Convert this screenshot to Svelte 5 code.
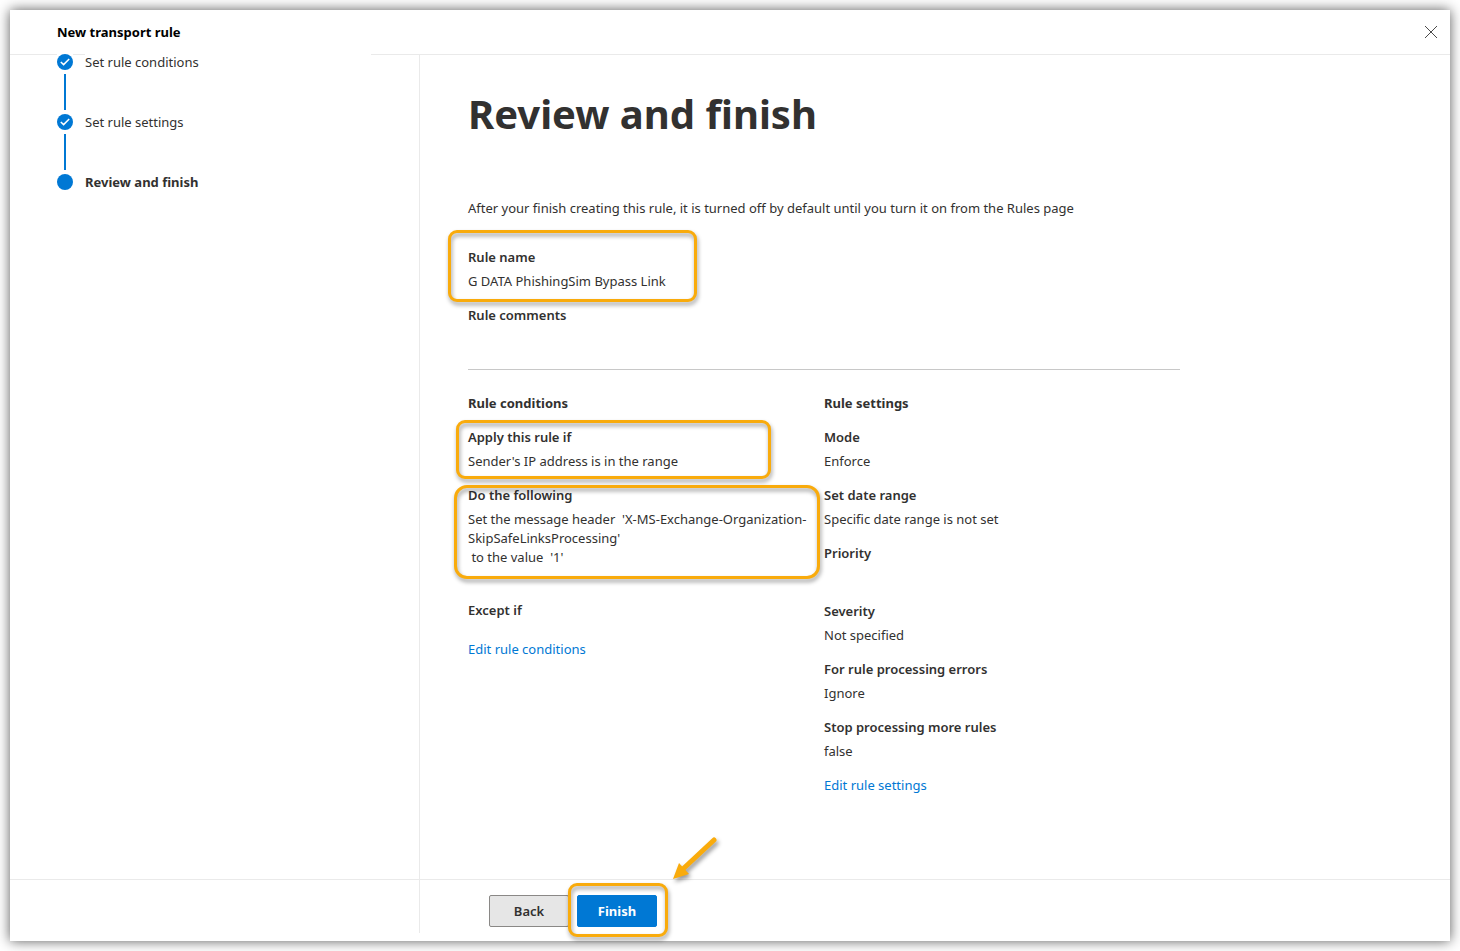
<script>
  const steps = [
    { label: 'Set rule conditions', done: true },
    { label: 'Set rule settings', done: true },
    { label: 'Review and finish', done: false }
  ];

  const conditions = [
    { label: 'Apply this rule if', value: "Sender's IP address is in the range", mark: 'mark-apply' },
    {
      label: 'Do the following',
      value: "Set the message header  'X-MS-Exchange-Organization-SkipSafeLinksProcessing'\n to the value  '1'\n\u00a0",
      mark: 'mark-action'
    },
    { label: 'Except if', value: '' }
  ];

  const settings = [
    { label: 'Mode', value: 'Enforce' },
    { label: 'Set date range', value: 'Specific date range is not set' },
    { label: 'Priority', value: '\u00a0' },
    { label: 'Severity', value: 'Not specified' },
    { label: 'For rule processing errors', value: 'Ignore' },
    { label: 'Stop processing more rules', value: 'false' }
  ];
</script>

{#snippet field(item)}
  <div class="field">
    <dt>{item.label}</dt>
    <dd>{item.value}</dd>
    {#if item.mark}
      <span class="mark {item.mark}"></span>
    {/if}
  </div>
{/snippet}

<div class="panel">
  <header>
    <h2>New transport rule</h2>
    <button class="close" type="button" aria-label="Close">
      <svg width="14" height="14" viewBox="0 0 14 14">
        <path d="M1 1 L13 13 M13 1 L1 13" fill="none" stroke="#4a4a4a" stroke-width="1" />
      </svg>
    </button>
  </header>

  <div class="body">
    <nav>
      <ol>
        {#each steps as step, i}
          <li class:current={!step.done}>
            <div class="track">
              <svg width="16" height="16" viewBox="0 0 16 16">
                <circle cx="8" cy="8" r="8" fill="#0078d4" />
                {#if step.done}
                  <path d="M3.8 8 L6.6 10.6 L12.2 5" fill="none" stroke="#fff" stroke-width="1.5" />
                {/if}
              </svg>
              {#if i < steps.length - 1}
                <span class="line"></span>
              {/if}
            </div>
            <div class="step-label">{step.label}</div>
          </li>
        {/each}
      </ol>
    </nav>

    <main>
      <h1>Review and finish</h1>
      <p>After your finish creating this rule, it is turned off by default until you turn it on from the Rules page</p>

      <dl>
        {@render field({ label: 'Rule name', value: 'G DATA PhishingSim Bypass Link', mark: 'mark-name' })}
        {@render field({ label: 'Rule comments', value: '\u00a0' })}
      </dl>

      <div class="columns">
        <section>
          <h3>Rule conditions</h3>
          <dl>
            {#each conditions as item}
              {@render field(item)}
            {/each}
          </dl>
          <a href="#conditions">Edit rule conditions</a>
        </section>
        <section>
          <h3>Rule settings</h3>
          <dl>
            {#each settings as item}
              {@render field(item)}
            {/each}
          </dl>
          <a href="#settings">Edit rule settings</a>
        </section>
      </div>
    </main>
  </div>

  <footer>
    <div class="rail"></div>
    <div class="actions">
      <button class="btn" type="button">Back</button>
      <div class="finish">
        <button class="btn primary" type="button">Finish</button>
        <span class="mark mark-finish"></span>
        <svg class="arrow" width="52" height="52" viewBox="0 0 52 52">
          <path d="M45 7 L15 35" fill="none" stroke="#f9ab0c" stroke-width="5" stroke-linecap="round" />
          <path d="M4 46 L10 30 L20 41 Z" fill="#f9ab0c" />
        </svg>
      </div>
    </div>
  </footer>
</div>

<style>
  :global(body) {
    margin: 0;
    background: #fff;
  }

  .panel {
    display: flex;
    flex-direction: column;
    box-sizing: border-box;
    min-height: calc(100vh - 20px);
    margin: 10px;
    background: #fff;
    box-shadow: 0 0 12px rgba(0, 0, 0, 0.65);
    color: #323130;
    font-family: "Segoe UI", "Noto Sans", "Open Sans", sans-serif;
    font-size: 13px;
    line-height: 19px;
  }

  header {
    display: flex;
    align-items: center;
    justify-content: space-between;
    height: 44px;
    padding: 0 12px 0 47px;
    border-bottom: 1px solid #eaeaea;
  }

  h1, h2, h3, p, ol, dl, dd {
    margin: 0;
    padding: 0;
  }

  h2, h3 {
    font-size: 13px;
    font-weight: 700;
  }

  h2 {
    color: #000;
  }

  .close {
    display: flex;
    padding: 0;
    border: 0;
    background: none;
    cursor: pointer;
  }

  .body {
    display: flex;
    flex: 1;
  }

  nav,
  .rail {
    box-sizing: border-box;
    flex: 0 0 410px;
    border-right: 1px solid #eaeaea;
  }

  nav {
    padding: 0 48px 0 47px;
  }

  /* the list has scrolled up against the header line */
  ol {
    margin-top: -1px;
    list-style: none;
  }

  li {
    display: flex;
    gap: 12px;
    height: 60px;
  }

  .track {
    display: flex;
    flex-direction: column;
    align-items: center;
    gap: 4px;
    background: #fff;
  }

  .line {
    width: 2px;
    height: 36px;
    background: #0078d4;
  }

  .step-label {
    flex: 1;
    height: 16px;
    background: #fff;
    line-height: 16px;
  }

  .current {
    font-weight: 700;
  }

  main {
    flex: 1;
    max-width: 712px;
    padding: 32px 48px;
  }

  h1 {
    font-size: 40px;
    font-weight: 700;
    line-height: 54px;
  }

  p {
    margin: 58px 0 30px;
  }

  dl {
    display: flex;
    flex-direction: column;
    gap: 15px;
  }

  .field {
    position: relative;
    display: flex;
    flex-direction: column;
    gap: 5px;
  }

  dt {
    font-weight: 600;
  }

  dd {
    white-space: pre-wrap;
  }

  .columns {
    display: grid;
    grid-template-columns: 1fr 1fr;
    margin-top: 20px;
    padding-top: 24px;
    border-top: 1px solid #c8c8c8;
  }

  section {
    display: flex;
    flex-direction: column;
    align-items: flex-start;
    gap: 15px;
  }

  a {
    color: #0078d4;
    text-decoration: none;
  }

  footer {
    display: flex;
    border-top: 1px solid #eaeaea;
  }

  .rail {
    margin-bottom: 8px;
  }

  .actions {
    display: flex;
    gap: 8px;
    padding: 15px 69px 14px;
  }

  .btn {
    box-sizing: border-box;
    width: 80px;
    height: 32px;
    padding: 0;
    border: 1px solid #8a8886;
    border-radius: 2px;
    background: #e6e6e6;
    color: #323130;
    font: inherit;
    font-weight: 600;
    cursor: pointer;
  }

  .primary {
    border-color: #0078d4;
    background: #0078d4;
    color: #fff;
    font-weight: 700;
  }

  .finish {
    position: relative;
  }

  /* orange callouts drawn over the form */
  .mark {
    position: absolute;
    border: 3px solid #f9ab0c;
    border-radius: 9px;
    filter: drop-shadow(1px 3px 2px rgba(0, 0, 0, 0.4));
    pointer-events: none;
  }

  .mark-name {
    inset: -18px auto -11px -20px;
    width: 243px;
  }

  .mark-apply {
    inset: -8px auto -8px -12px;
    width: 309px;
  }

  .mark-action {
    inset: -1px auto 7px -14px;
    width: 360px;
    border-radius: 13px;
  }

  .mark-finish {
    inset: -12px -11px -10px -9px;
    background: none;
  }

  .arrow {
    position: absolute;
    left: 92px;
    top: -62px;
    filter: drop-shadow(2px 3px 2px rgba(0, 0, 0, 0.4));
  }
</style>
